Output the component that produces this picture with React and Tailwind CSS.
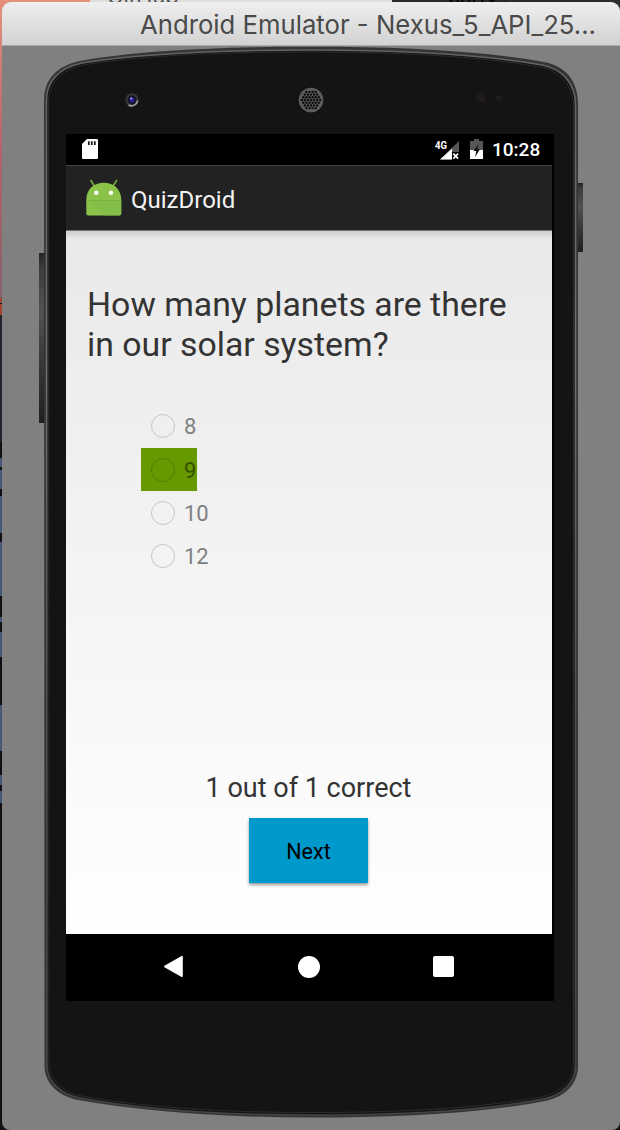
import React from "react";

const OPTIONS = ["8", "9", "10", "12"];

function SpeakerGrille() {
  const dots = [];
  for (let r = -5; r <= 5; r++) {
    for (let c = -5; c <= 5; c++) {
      const x = c * 3.1 + (r % 2 ? 1.55 : 0);
      const y = r * 2.7;
      if (x * x + y * y < 115) dots.push([x, y]);
    }
  }
  return (
    <svg className="h-[26px] w-[26px]" viewBox="-13 -13 26 26">
      <circle r="12.3" fill="#5c5c5c" />
      {dots.map(([x, y], i) => (
        <circle key={i} cx={x} cy={y} r="1.2" fill="#0d0d0d" />
      ))}
    </svg>
  );
}

function PhoneShell() {
  return (
    <svg className="absolute left-0 top-0 h-[1084px] w-[618px]" viewBox="2 46 618 1084">
      <defs>
        <linearGradient id="side" x1="0" x2="0" y1="0" y2="1">
          <stop offset="0" stopColor="#222222" />
          <stop offset=".08" stopColor="#3c3c3c" />
          <stop offset=".35" stopColor="#525252" />
          <stop offset=".6" stopColor="#3b3b3b" />
          <stop offset="1" stopColor="#202020" />
        </linearGradient>
        <linearGradient id="rim" x1="0" x2="0" y1="0" y2="1">
          <stop offset="0" stopColor="#626265" />
          <stop offset=".3" stopColor="#6d6d72" />
          <stop offset=".65" stopColor="#4c4c4e" />
          <stop offset="1" stopColor="#434343" />
        </linearGradient>
      </defs>
      <rect x="39" y="253" width="6" height="170" fill="url(#side)" />
      <rect x="577" y="183" width="6" height="69" fill="url(#side)" />
      <path
        d="M44 100C44 80 56 66 80 61C145 49.5 230 46.8 311 46.8C392 46.8 477 50 544 62C565 66 578 80 578 104V1066C578 1084 565 1097 545 1101C477 1114 394 1117.5 311 1117.5C228 1117.5 145 1112 78 1100C58 1096 44.5 1083 44.5 1066Z"
        fill="#353536"
      />
      <path
        d="M46.5 100C46.5 82 58 68 82 63C147 52.5 230 50 311 50C392 50 476 53.5 542 65C562 69 575.5 83 575.5 105V1066C575.5 1082 563 1095 543 1099C477 1112 394 1115 311 1115C228 1115 145 1110 80 1098C60 1094 47 1081 47 1066Z"
        fill="#141414"
        stroke="url(#rim)"
        strokeWidth="1.6"
      />
      <path
        d="M48.5 102C48.5 85 59 71 83 65C148 54.5 230 52 311 52C392 52 475 55.5 540 67C560 71 573.5 85 573.5 107V1065C573.5 1080 561 1093 541 1097C475 1109 394 1112.5 311 1112.5C228 1112.5 147 1108 82 1096C62 1092 49 1079 49 1065Z"
        fill="#141414"
        stroke="#2b2b2c"
        strokeWidth="1"
      />
    </svg>
  );
}

function AndroidIcon() {
  return (
    <svg className="h-[38px] w-[38px]" viewBox="0 0 38 38">
      <path d="m5.5 1 4 6M32 1l-4 6" stroke="#76ac40" strokeWidth="1.6" />
      <path d="M1.3 21C1.3 10 9 3.7 18.8 3.7S36.3 10 36.3 21v13.5q0 2-2 2h-31q-2 0-2-2Z" fill="#8bc34a" />
      <path d="m5 22 14.5 14.5h14.8q2 0 2-2V22Z" fill="#80b947" opacity=".6" />
      <path d="M1.3 21.5h35" stroke="#78ae40" strokeWidth=".9" />
      <circle cx="11.3" cy="13.8" r="2.2" fill="#fff" />
      <circle cx="26" cy="13.8" r="2.2" fill="#fff" />
    </svg>
  );
}

function StatusBar() {
  return (
    <div className="flex h-[31px] shrink-0 items-center bg-black pl-4 pr-3">
      <svg className="-mt-px h-5 w-4" viewBox="0 0 16 20">
        <path d="M5 0h10q1 0 1 1v18q0 1-1 1H1q-1 0-1-1V5Z" fill="#fff" />
        <path d="M6.8 2.3v3.7M9.8 2.3v3.7M12.8 2.3v3.7" stroke="#111" strokeWidth="1.7" />
      </svg>
      <svg className="ml-auto h-[22px] w-[26px] shrink-0" viewBox="0 0 26 22">
        <text x="0" y="9.6" textLength="12" lengthAdjust="spacingAndGlyphs" fill="#fff" fontFamily="Roboto, sans-serif" fontSize="11.5" fontWeight="700">4G</text>
        <path d="M5 20.5 24 2v11h-7v7.5Z" fill="#555" />
        <path d="M5 20.5 17 9.5v11Z" fill="#fff" />
        <path d="M17 13.5h7.5v7H17Z" fill="#000" />
        <path d="m18.3 14.6 4.8 5m0-5-4.8 5" stroke="#fff" strokeWidth="1.7" />
      </svg>
      <svg className="-mt-px ml-[9px] h-5 w-[13px] shrink-0" viewBox="0 0 13 20">
        <path d="M4 0h5v2h4v9H0V2h4Z" fill="#555" />
        <path d="M0 11h13v9H0Z" fill="#fff" />
        <path d="M8.5 5 3.5 12h2.7l-1 6 4.8-8H7.3Z" fill="#111" />
      </svg>
      <span className="ml-[9px] w-[50px] whitespace-nowrap text-[19px] font-medium leading-6 text-white">10:28</span>
    </div>
  );
}

function AppBar() {
  return (
    <div className="flex h-[66px] shrink-0 items-center border-b border-t border-b-[#777] border-t-[#414141] bg-[#222] pl-[19px]">
      <AndroidIcon />
      <h1 className="ml-2 whitespace-nowrap pt-[3px] text-[24px] leading-7 text-[#f3f3f3]">QuizDroid</h1>
    </div>
  );
}

function Option({ label, correct }) {
  return (
    <div
      className={
        correct
          ? "flex h-[43px] w-[56px] items-center bg-[#669900] pl-[9.5px]"
          : "flex h-[43px] w-[80px] items-center pl-[9.5px]"
      }
    >
      <span
        className={
          correct
            ? "h-6 w-6 shrink-0 rounded-full border border-[#527c00]"
            : "h-6 w-6 shrink-0 rounded-full border border-[#c5c5c5]"
        }
      />
      <span className={correct ? "ml-[9.5px] pt-0.5 text-[22px] leading-6 text-[#365100]" : "ml-[9.5px] pt-0.5 text-[22px] leading-6 text-[#808080]"}>
        {label}
      </span>
    </div>
  );
}

function Quiz() {
  return (
    <main className="flex h-[703px] flex-col items-center bg-linear-to-b from-[#e9e9e9] to-white">
      <div className="h-2 w-full shrink-0 bg-linear-to-b from-[#cccccc] to-transparent" />
      <h2 className="mt-[46px] w-full whitespace-nowrap pl-[21px] text-[33.8px] leading-10 text-[#333]">
        How many planets are there
        <br />
        in our solar system?
      </h2>
      <div className="mt-[39.8px] flex w-full flex-col gap-[0.4px] pl-[75px]">
        {OPTIONS.map((o) => (
          <Option key={o} label={o} correct={o === "9"} />
        ))}
      </div>
      <p className="mr-px mt-[194px] whitespace-nowrap text-[27px] leading-8 text-[#333]">1 out of 1 correct</p>
      <button className="mr-px mt-[14.5px] h-[65px] w-[119px] shrink-0 bg-[#0099cc] pt-[3px] text-[21.5px] text-black shadow-[0_2px_3px_rgba(0,0,0,0.4)]">
        Next
      </button>
    </main>
  );
}

function NavBar() {
  return (
    <div className="flex h-[67px] items-center bg-black pb-0.5 pl-[97px]">
      <svg className="h-[23px] w-[21px]" viewBox="0 0 21 23">
        <path d="M1.8 11.5 19 1.7v19.6Z" fill="#fff" stroke="#fff" strokeWidth="1.6" strokeLinejoin="round" />
      </svg>
      <span className="ml-[113.5px] h-[22px] w-[22px] rounded-full bg-white" />
      <span className="ml-[113.5px] h-[21px] w-[21px] rounded-[2px] bg-white" />
    </div>
  );
}

export default function App() {
  return (
    <div className="relative h-[1130px] w-[620px] overflow-hidden bg-[#111116] font-['Roboto',sans-serif]">
      <div className="absolute left-0 top-0 h-[303px] w-[90px] bg-linear-to-b from-[#e5917c] via-[#b4626b] to-[#85606a]" />
      <svg className="absolute left-0 top-[296px] h-[534px] w-1" viewBox="0 296 4 534" preserveAspectRatio="none">
        <path d="M0 298h4v4H0Zm0 6h4v11H0Z" fill="#a44532" />
        <path d="M0 315h4v127H0Z" fill="#24222d" />
        <path d="M0 458h4v9H0Zm0 12h4v19H0Zm0 26h4v37H0Zm0 46h4v54H0Zm0 75h4v5H0Zm0 15h4v25H0Zm0 73h4v46H0Zm0 70h4v10H0Zm0 16h4v12H0Z" fill="#465876" />
      </svg>
      <div className="absolute left-[90px] top-0 h-2 w-[302px] overflow-hidden bg-[#dededb]">
        <span className="absolute -top-[14px] left-[17px] font-['Inter',sans-serif] text-[22px] leading-5 text-[#555]">GitHub</span>
      </div>
      <div className="absolute left-[392px] top-0 h-2 w-[228px] overflow-hidden bg-[#2c2c2c]">
        <span className="absolute -top-[13px] left-[56px] font-['Inter',sans-serif] text-[20px] leading-5 text-black">party !</span>
      </div>
      <div className="relative ml-0.5 flex h-[1130px] w-[618px] flex-col pt-0.5">
        <header className="flex h-11 shrink-0 items-center rounded-t-[9px] border-b border-[#aaa] bg-linear-to-b from-[#efefef] to-[#d2d2d2] pl-[138px]">
          <svg className="block h-8 w-[460px]" viewBox="0 0 460 32">
            <text x="0" y="26" textLength="456" lengthAdjust="spacingAndGlyphs" fill="#4a4a4a" fontFamily="Inter, sans-serif" fontSize="26">
              Android Emulator - Nexus_5_API_25...
            </text>
          </svg>
        </header>
        <div className="relative h-[1084px] shrink-0 overflow-hidden rounded-b-[8px] bg-[#808080]">
          <PhoneShell />
          <div className="relative flex h-full flex-col pl-16">
            <div className="flex h-[88px] shrink-0 items-center pl-[58px] pt-5">
              <svg className="h-4 w-4" viewBox="0 0 16 16">
                <circle cx="8" cy="8" r="6.8" fill="#343434" />
                <path d="M4.5 13a6 6 0 0 0 9-4.5" fill="none" stroke="#a0a0a0" strokeWidth="1.5" />
                <circle cx="8" cy="8" r="4.4" fill="#14142b" />
                <circle cx="8" cy="8" r="2.4" fill="#2920a0" />
                <circle cx="7.2" cy="6.4" r="1" fill="#b6bdec" />
              </svg>
              <div className="-mt-px ml-[158px]">
                <SpeakerGrille />
              </div>
              <svg className="-mt-0.5 ml-[150px] h-4 w-8" viewBox="0 0 32 16">
                <circle cx="7" cy="7" r="5" fill="#1d1a19" />
                <circle cx="8" cy="8" r="1" fill="#38251f" />
                <circle cx="24.5" cy="7" r="3.5" fill="#1d1a19" />
                <circle cx="24.5" cy="7" r="1" fill="#29211e" />
              </svg>
            </div>
            <div className="flex h-[867px] w-[488px] shrink-0 flex-col bg-black">
              <StatusBar />
              <div className="w-[486px]">
                <AppBar />
                <Quiz />
              </div>
              <NavBar />
            </div>
          </div>
        </div>
      </div>
    </div>
  );
}
